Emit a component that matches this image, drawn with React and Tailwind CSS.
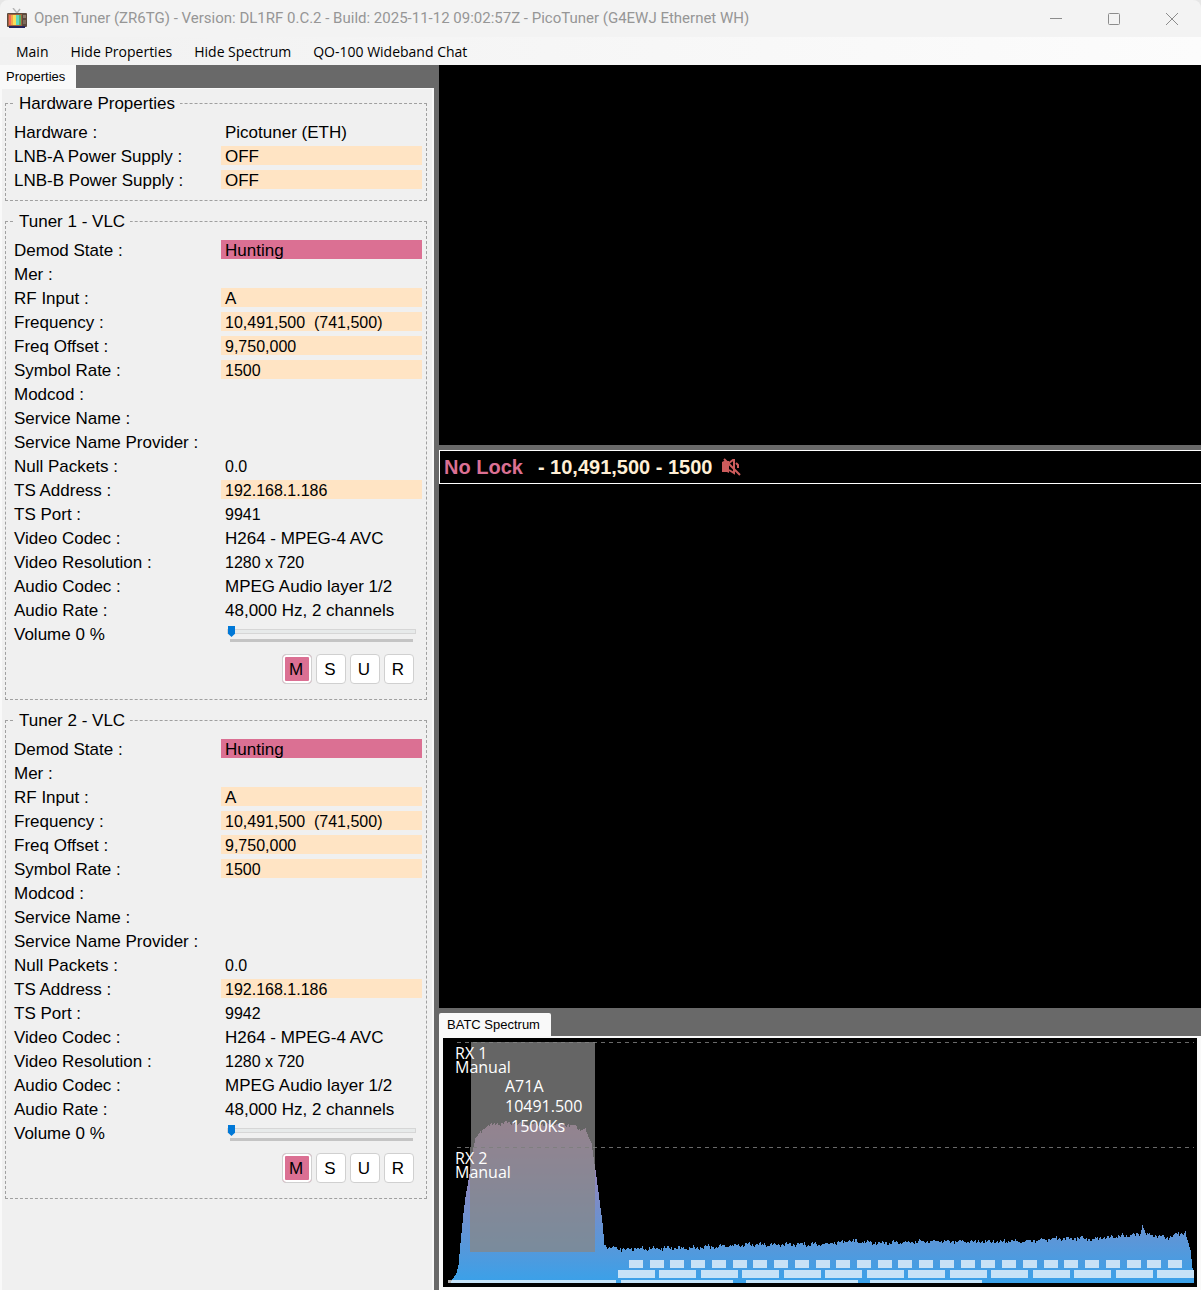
import React, { useState } from 'react'
import clsx from 'clsx'

const MENU = ['Main', 'Hide Properties', 'Hide Spectrum', 'QO-100 Wideband Chat']

const HARDWARE = [
  { label: 'Hardware', value: 'Picotuner (ETH)' },
  { label: 'LNB-A Power Supply', value: 'OFF', tone: 'edit' },
  { label: 'LNB-B Power Supply', value: 'OFF', tone: 'edit' },
]

const tunerRows = port => [
  { label: 'Demod State', value: 'Hunting', tone: 'alert' },
  { label: 'Mer', value: '' },
  { label: 'RF Input', value: 'A', tone: 'edit' },
  { label: 'Frequency', value: '10,491,500  (741,500)', tone: 'edit', numeric: true },
  { label: 'Freq Offset', value: '9,750,000', tone: 'edit', numeric: true },
  { label: 'Symbol Rate', value: '1500', tone: 'edit', numeric: true },
  { label: 'Modcod', value: '' },
  { label: 'Service Name', value: '' },
  { label: 'Service Name Provider', value: '' },
  { label: 'Null Packets', value: '0.0', numeric: true },
  { label: 'TS Address', value: '192.168.1.186', tone: 'edit', numeric: true },
  { label: 'TS Port', value: port, numeric: true },
  { label: 'Video Codec', value: 'H264 - MPEG-4 AVC' },
  { label: 'Video Resolution', value: '1280 x 720', numeric: true },
  { label: 'Audio Codec', value: 'MPEG Audio layer 1/2' },
  { label: 'Audio Rate', value: '48,000 Hz, 2 channels' },
]

const TONES = {
  edit: 'bg-[#ffe4c4]',
  alert: 'bg-[#db7093]',
}

// [x, y] points of the spectrum envelope, joined by straight lines
const ENVELOPE = [
  [8, 243], [13, 235], [15, 227], [17, 205], [20, 175], [22, 159], [25, 142], [27, 129],
  [30, 109], [32, 100], [36, 95], [40, 92], [45, 87], [64, 85], [90, 87], [120, 86], [130, 88],
  [135, 91], [142, 91], [145, 99], [148, 105], [150, 119], [152, 132], [155, 154], [159, 185],
  [161, 207], [164, 209], [174, 211], [247, 210], [300, 207], [377, 206], [395, 204],
  [412, 203], [430, 205], [502, 203], [520, 204], [587, 203], [610, 201], [630, 200],
  [650, 201], [690, 197], [697, 196], [699, 187], [701, 192], [702, 196], [715, 198],
  [724, 200], [732, 196], [742, 195], [744, 202], [747, 212], [749, 230], [750, 233], [751, 233],
]
const FLOOR = 245

function buildTrace() {
  let d = `M8 ${FLOOR}`
  let seg = 0
  for (let x = 8; x < 751; x++) {
    while (x > ENVELOPE[seg + 1][0]) seg++
    const [x0, y0] = ENVELOPE[seg]
    const [x1, y1] = ENVELOPE[seg + 1]
    const base = y0 + ((y1 - y0) * (x - x0)) / (x1 - x0)
    const flat = Math.abs(y1 - y0) < 5
    const wave = flat ? Math.sin(x * 0.47) + Math.sin(x * 1.7) * 0.9 + Math.sin(x * x * 0.31) : 0
    d += `V${Math.round(base + wave)}H${x + 1}`
  }
  return `${d}V${FLOOR}Z`
}

const TRACE = buildTrace()
const NARROW = Array.from({ length: 27 }, (_, i) => Math.round(186 + i * 20.73))
const MEDIUM = Array.from({ length: 14 }, (_, i) => Math.round(175 + i * 41.46))
const WIDE = [[5, 168], [178, 112], [303, 112], [427, 112]]

function TvIcon() {
  return (
    <svg viewBox="0 0 21 21" className="h-[21px] w-[21px]" aria-hidden="true">
      <path d="M7 0l4 5M14 1l-3 4" stroke="#b4b4b4" strokeWidth="1.4" />
      <rect x="1" y="5" width="20" height="14" rx="1" fill="#5c4a3e" />
      <rect x="2" y="6" width="14" height="12" fill="#a0623c" />
      <rect x="3" y="7" width="3" height="10" fill="#ee6a5a" />
      <rect x="5" y="7" width="3" height="10" fill="#f8a548" />
      <rect x="7" y="7" width="3" height="10" fill="#f6df58" />
      <rect x="10" y="7" width="3" height="10" fill="#5fd8c0" />
      <rect x="13" y="7" width="2" height="10" fill="#58b368" />
      <rect x="17" y="7" width="3" height="3" fill="#8d7b6a" />
      <rect x="17" y="12" width="3" height="4" fill="#7d6a5c" />
      <rect x="3" y="18" width="16" height="2" fill="#24245c" />
    </svg>
  )
}

function MuteIcon() {
  return (
    <svg viewBox="0 0 20 18" className="h-[18px] w-5" role="img" aria-label="Muted">
      <path d="M1 4l2-1 5 0 0 12-2-1-5 0z" fill="#cd5c5c" />
      <path d="M8 5l4-3h1v13l-5-3M15 5l2 2v3M3 1l16 16" fill="none" stroke="#cd5c5c" strokeWidth="2" />
    </svg>
  )
}

function TitleBar() {
  return (
    <header className="flex h-[37px] items-center rounded-t-lg bg-[#f3f3f3] pl-1.5">
      <TvIcon />
      <h1 className="ml-[7px] flex-1 truncate font-[Roboto,sans-serif] text-[15px] text-[#969696]">
        Open Tuner (ZR6TG) - Version: DL1RF 0.C.2 - Build: 2025-11-12 09:02:57Z - PicoTuner (G4EWJ Ethernet WH)
      </h1>
      <button aria-label="Minimize" className="flex h-full w-[58px] items-center justify-center">
        <svg viewBox="0 0 12 12" className="size-3"><path d="M0 5.5h12" stroke="#8c8c8c" /></svg>
      </button>
      <button aria-label="Maximize" className="flex h-full w-[58px] items-center justify-center">
        <svg viewBox="0 0 12 12" className="size-3"><rect x=".5" y=".5" width="11" height="11" rx="1" fill="none" stroke="#8c8c8c" /></svg>
      </button>
      <button aria-label="Close" className="flex h-full w-[58px] items-center justify-center">
        <svg viewBox="0 0 12 12" className="size-3"><path d="M0 0l12 12M12 0L0 12" stroke="#8c8c8c" /></svg>
      </button>
    </header>
  )
}

function Row({ label, value, tone, numeric }) {
  return (
    <div className="flex h-6">
      <dt className="w-[207px] shrink-0 leading-[26px]">{label} :</dt>
      <dd
        className={clsx(
          'mt-0.5 h-[19px] flex-1 overflow-hidden pl-1 whitespace-pre',
          TONES[tone],
          numeric ? 'text-base/[22px]' : 'leading-[22px]'
        )}
      >
        {value}
      </dd>
    </div>
  )
}

function Group({ title, rows, children }) {
  return (
    <fieldset className="border border-dashed border-[#a0a0a0] pt-[5px] pr-1 pb-2 pl-2">
      <legend className="h-6 px-[5px] leading-[26px]">{title}</legend>
      <dl>
        {rows.map(row => <Row key={row.label} {...row} />)}
      </dl>
      {children}
    </fieldset>
  )
}

function Tuner({ id, port }) {
  const [volume, setVolume] = useState(0)
  const [muted, setMuted] = useState(true)

  return (
    <Group title={`Tuner ${id} - VLC`} rows={tunerRows(port)}>
      <div className="flex h-6">
        <label htmlFor={`volume-${id}`} className="w-[207px] shrink-0 leading-[26px]">Volume {volume} %</label>
        <div className="flex flex-1 flex-col px-1.5 pt-1">
          <input
            id={`volume-${id}`}
            type="range"
            min="0"
            max="100"
            value={volume}
            onChange={e => setVolume(Number(e.target.value))}
            className="h-[11px] w-full appearance-none bg-transparent [&::-webkit-slider-runnable-track]:h-[5px] [&::-webkit-slider-runnable-track]:border [&::-webkit-slider-runnable-track]:border-[#d6d6d6] [&::-webkit-slider-runnable-track]:bg-[#e7eaea] [&::-webkit-slider-thumb]:-mt-1 [&::-webkit-slider-thumb]:h-[11px] [&::-webkit-slider-thumb]:w-[7px] [&::-webkit-slider-thumb]:appearance-none [&::-webkit-slider-thumb]:bg-[#0078d7] [&::-webkit-slider-thumb]:[clip-path:polygon(0_0,100%_0,100%_70%,50%_100%,0_70%)]"
          />
          {/* tick strip */}
          <div className="mx-[3px] mt-0.5 h-[3px] bg-[#c4c4c4]" />
        </div>
      </div>
      <div className="mt-2 mr-2 mb-[7px] flex justify-end gap-1">
        <button
          onClick={() => setMuted(!muted)}
          aria-pressed={muted}
          className={clsx(
            'size-[30px] rounded border border-[#d0d0d0] pt-0.5 pr-0.5',
            muted ? 'bg-[#db7093] shadow-[inset_0_0_0_2px_#fff]' : 'bg-white'
          )}
        >
          M
        </button>
        {['S', 'U', 'R'].map(key => (
          <button key={key} className="size-[30px] rounded border border-[#d0d0d0] bg-white pt-0.5 pr-0.5">{key}</button>
        ))}
      </div>
    </Group>
  )
}

function Marker({ name, mode }) {
  return (
    <p className="leading-[14px]">
      {name}
      <br />
      {mode}
    </p>
  )
}

function Spectrum() {
  return (
    <div className="relative h-[249px] bg-black font-['Open_Sans',sans-serif] text-base text-white">
      <svg viewBox="0 0 754 249" preserveAspectRatio="none" className="block h-full w-full" shapeRendering="crispEdges" aria-hidden="true">
        <defs>
          <linearGradient id="trace" gradientUnits="userSpaceOnUse" x1="0" y1="0" x2="0" y2="249">
            <stop offset="0" stopColor="#ff6384" />
            <stop offset="1" stopColor="#36a2eb" />
          </linearGradient>
        </defs>
        <path d={TRACE} fill="url(#trace)" />
        <path d="M14 4.5H751M14 109.5H751" stroke="#696969" strokeDasharray="4 4" />
        <g fill="#fff" fillOpacity=".7">
          {NARROW.map(x => <rect key={x} x={x} y="222" width="14" height="8" />)}
          {MEDIUM.map(x => <rect key={x} x={x} y="232" width="37" height="8" />)}
          {WIDE.map(([x, w]) => <rect key={x} x={x} y="242" width={w} height="3" />)}
        </g>
        {/* tuned channel */}
        <path d="M28 4H152V214H27V109H28Z" fill="#878787" fillOpacity=".75" />
      </svg>
      <div className="absolute top-2 left-3"><Marker name="RX 1" mode="Manual" /></div>
      <div className="absolute top-[113px] left-3"><Marker name="RX 2" mode="Manual" /></div>
      <div className="absolute top-[38px] left-[62px] leading-5">
        <p>A71A</p>
        <p>10491.500</p>
        <p className="pl-1.5">1500Ks</p>
      </div>
    </div>
  )
}

export default function App() {
  return (
    <div className="flex min-h-screen flex-col bg-[#e6e6e6] font-['Liberation_Sans',Arial,sans-serif] text-black">
      <TitleBar />
      <nav className="flex h-7 items-center gap-[22px] bg-linear-to-r from-[#f1f1f1] to-[#fcfcfc] pt-0.5 pl-4 font-['Open_Sans',sans-serif] text-sm">
        {MENU.map(item => <button key={item}>{item}</button>)}
      </nav>

      <div className="flex flex-1 bg-[#696969]">
        {/* Properties */}
        <aside className="flex w-[434px] shrink-0 flex-col">
          <div className="flex h-[23px]">
            <button className="bg-[#f9f9f9] pr-[11px] pl-1.5 text-[13px]">Properties</button>
          </div>
          <div className="flex-1 border-x-2 border-t border-[#f9f9f9] bg-[#f0f0f0] pt-0.5 pr-[5px] pl-[3px] text-[17px]">
            <div className="flex flex-col gap-2">
              <Group title="Hardware Properties" rows={HARDWARE} />
              <Tuner id={1} port="9941" />
              <Tuner id={2} port="9942" />
            </div>
          </div>
        </aside>

        {/* Video outputs and spectrum */}
        <main className="ml-[5px] flex min-w-0 flex-1 flex-col">
          <div className="h-[380px] bg-black" />
          <div className="mt-[5px] flex flex-1 flex-col bg-black">
            <div className="flex h-[34px] items-center border border-r-0 border-white pl-1 text-xl font-bold">
              <span className="text-[#db7093]">No Lock</span>
              <span className="ml-[15px] text-[#ffefd5]">- 10,491,500 - 1500</span>
              <span className="ml-2"><MuteIcon /></span>
            </div>
          </div>
          <div className="mt-[5px] flex h-[23px]">
            <button className="rounded-t-xs bg-[#f9f9f9] pr-[11px] pl-2 text-[13px]">BATC Spectrum</button>
          </div>
          <div className="border-x-4 border-t-2 border-b-3 border-[#f9f9f9]">
            <Spectrum />
          </div>
        </main>
      </div>
    </div>
  )
}
